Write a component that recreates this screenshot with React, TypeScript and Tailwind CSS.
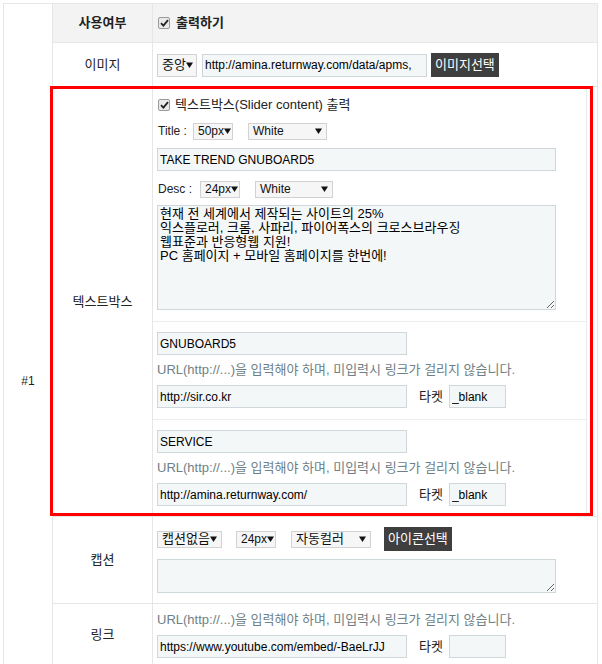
import React from 'react';

const font = "font-['Liberation_Sans','Noto_Sans_CJK_KR',sans-serif]";

function Caret() {
  return (
    <svg width="7" height="6" viewBox="0 0 7 6" className="shrink-0">
      <path d="M0 0.5h7L3.5 6z" fill="#111" />
    </svg>
  );
}

function Check() {
  return (
    <span className="flex h-[12px] w-[12px] shrink-0 items-center justify-center rounded-[2px] border border-[#9a9a9a] bg-[#e9e9e9]">
      <svg width="9" height="8" viewBox="0 0 9 8">
        <path d="M1 4.2l2.4 2.4L8 1.2" fill="none" stroke="#222" strokeWidth="1.8" />
      </svg>
    </span>
  );
}

function Select({ label, ko, className = '' }: { label: string; ko?: boolean; className?: string }) {
  return (
    <div
      className={`flex h-[17px] items-center justify-between whitespace-nowrap border border-[#d2d2d2] bg-[#f6f6f6] px-[4px] text-[#111] ${
        ko ? 'text-[13px]' : 'text-[12px]'
      } ${className}`}
    >
      <span className="shrink-0">{label}</span>
      <Caret />
    </div>
  );
}

function TextInput({ value, className = '' }: { value: string; className?: string }) {
  return (
    <input
      readOnly
      value={value}
      className={`h-[23px] border border-[#cfd7db] bg-[#f4f7f8] px-[2px] text-[12px] text-black outline-none ${font} ${className}`}
    />
  );
}

function DarkButton({ label }: { label: string }) {
  return (
    <span className="flex h-[24px] items-center whitespace-nowrap bg-[#3f3f3f] px-[4px] text-[13px] text-white">
      {label}
    </span>
  );
}

function Help() {
  return (
    <p className="h-[16px] whitespace-nowrap text-[13px] leading-[16px] text-[#6e7f86]">
      URL(http://...)을 입력해야 하며, 미입력시 링크가 걸리지 않습니다.
    </p>
  );
}

function Row({
  label,
  bold,
  className = '',
  children,
}: {
  label: string;
  bold?: boolean;
  className?: string;
  children?: React.ReactNode;
}) {
  return (
    <div className={`relative flex border-b border-[#e6e6e6] ${className}`}>
      <div
        className={`flex w-[100px] shrink-0 items-center justify-center border-r border-[#e6e6e6] text-[13px] text-[#222] ${
          bold ? 'font-bold' : ''
        }`}
      >
        {label}
      </div>
      <div className="flex min-w-0 flex-1 flex-col">{children}</div>
    </div>
  );
}

function LinkBlock({ title, url, first }: { title: string; url: string; first?: boolean }) {
  return (
    <div className={`flex flex-col border-t border-[#ececec] pl-[4px] pt-[10px] ${first ? 'h-[98px]' : 'flex-1'}`}>
      <TextInput value={title} className="w-[250px]" />
      <div className="mt-[7px]">
        <Help />
      </div>
      <div className="mt-[7px] flex items-center">
        <TextInput value={url} className="w-[250px]" />
        <span className="ml-[12px] mr-[6px] text-[13px] text-[#222]">타켓</span>
        <TextInput value="_blank" className="w-[57px]" />
      </div>
    </div>
  );
}

export default function App() {
  return (
    <div className={`h-[664px] w-[602px] overflow-hidden bg-white ${font} text-[12px] text-[#222]`}>
      <div className="ml-[3px] mt-[3px] flex w-[595px] border-l border-r border-t border-[#e6e6e6]">
        <div className="flex w-[49px] shrink-0 items-center justify-center border-r border-[#e6e6e6] text-[12px]">
          #1
        </div>
        <div className="flex min-w-0 flex-1 flex-col">
          <Row label="사용여부" bold className="h-[39px] bg-[#f3f3f3]">
            <div className="flex h-full items-center gap-[6px] pl-[5px]">
              <Check />
              <span className="text-[13px] font-bold">출력하기</span>
            </div>
          </Row>

          <Row label="이미지" className="h-[44px]">
            <div className="flex h-full items-center pl-[4px] pt-[1px]">
              <Select label="중앙" ko className="h-[23px] w-[40px] px-[3px]" />
              <TextInput value="http://amina.returnway.com/data/apms," className="ml-[5px] w-[225px]" />
              <span className="ml-[4px]">
                <DarkButton label="이미지선택" />
              </span>
            </div>
          </Row>

          <Row label="텍스트박스" className="h-[430px]">
            <div className="mr-[10px] flex h-full flex-col border-r border-[#ececec]">
              <div className="flex h-[234px] flex-col pl-[4px] pt-[9px]">
                <div className="flex h-[18px] items-center gap-[5px] pl-[1px]">
                  <Check />
                  <span className="text-[13px]">텍스트박스(Slider content) 출력</span>
                </div>
                <div className="mt-[7px] flex h-[20px] items-center">
                  <span className="w-[36px] pl-[1px]">Title :</span>
                  <Select label="50px" className="w-[40px]" />
                  <Select label="White" className="ml-[15px] w-[79px]" />
                </div>
                <TextInput value="TAKE TREND GNUBOARD5" className="mt-[7px] w-[399px]" />
                <div className="mt-[8px] flex h-[20px] items-center">
                  <span className="w-[43px] pl-[1px]">Desc :</span>
                  <Select label="24px" className="w-[40px]" />
                  <Select label="White" className="ml-[15px] w-[78px]" />
                </div>
                <textarea
                  readOnly
                  value={
                    '현재 전 세계에서 제작되는 사이트의 25%\n익스플로러, 크롬, 사파리, 파이어폭스의 크로스브라우징\n웹표준과 반응형웹 지원!\nPC 홈페이지 + 모바일 홈페이지를 한번에!'
                  }
                  className={`mt-[6px] h-[105px] w-[399px] resize border border-[#cfd7db] bg-[#f4f7f8] px-[2px] py-[1px] text-[13px] leading-[14px] text-black outline-none ${font}`}
                />
              </div>
              <LinkBlock first title="GNUBOARD5" url="http://sir.co.kr" />
              <LinkBlock title="SERVICE" url="http://amina.returnway.com/" />
            </div>
            <div className="pointer-events-none absolute -left-[3px] -top-[1px] bottom-0 right-[4px] border-[3px] border-[#ff0000]" />
          </Row>

          <Row label="캡션" className="h-[87px]">
            <div className="flex flex-col pl-[4px] pt-[10px]">
              <div className="flex h-[24px] items-center">
                <Select label="캡션없음" ko className="w-[65px] px-[3px]" />
                <Select label="24px" className="ml-[14px] w-[40px]" />
                <Select label="자동컬러" ko className="ml-[15px] w-[80px]" />
                <span className="ml-[13px]">
                  <DarkButton label="아이콘선택" />
                </span>
              </div>
              <textarea
                readOnly
                value=""
                className={`mt-[8px] h-[34px] w-[399px] resize border border-[#cfd7db] bg-[#f4f7f8] px-[2px] text-[12px] outline-none ${font}`}
              />
            </div>
          </Row>

          <Row label="링크" className="h-[62px]">
            <div className="flex flex-col pl-[4px] pt-[8px]">
              <Help />
              <div className="mt-[7px] flex items-center">
                <TextInput value="https://www.youtube.com/embed/-BaeLrJJ" className="w-[250px]" />
                <span className="ml-[12px] mr-[6px] text-[13px]">타켓</span>
                <TextInput value="" className="w-[57px]" />
              </div>
            </div>
          </Row>

          <Row label="" className="h-[92px]" />
        </div>
      </div>
    </div>
  );
}
